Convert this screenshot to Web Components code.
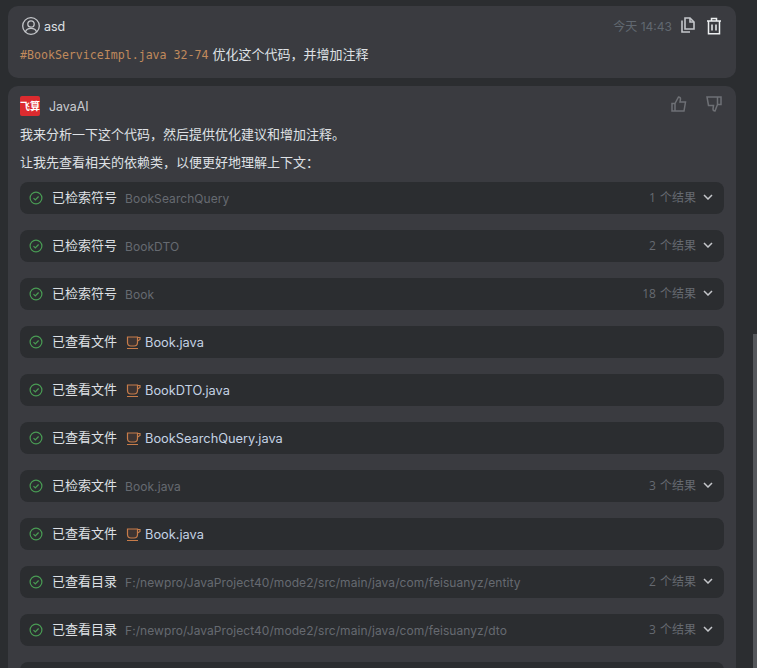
<!DOCTYPE html>
<html lang="zh">
<head>
<meta charset="utf-8">
<title>JavaAI</title>
<style>
  html, body { margin: 0; height: 100%; overflow: hidden; }
  body {
    background: #2b2d30;
    color: #dfe1e5;
    font: 12.8px/20px Inter, "Noto Sans CJK SC", sans-serif;
  }
</style>
</head>
<body>
<chat-page>
  <user-card name="asd" time="今天 14:43"><span slot="code">#BookServiceImpl.java 32-74</span>优化这个代码，并增加注释</user-card>
  <ai-card name="JavaAI">
    <p>我来分析一下这个代码，然后提供优化建议和增加注释。</p>
    <p>让我先查看相关的依赖类，以便更好地理解上下文：</p>
    <step-row slot="steps" action="已检索符号" detail="BookSearchQuery" count="1 个结果"></step-row>
    <step-row slot="steps" action="已检索符号" detail="BookDTO" count="2 个结果"></step-row>
    <step-row slot="steps" action="已检索符号" detail="Book" count="18 个结果"></step-row>
    <step-row slot="steps" action="已查看文件" file="Book.java"></step-row>
    <step-row slot="steps" action="已查看文件" file="BookDTO.java"></step-row>
    <step-row slot="steps" action="已查看文件" file="BookSearchQuery.java"></step-row>
    <step-row slot="steps" action="已检索文件" detail="Book.java" count="3 个结果"></step-row>
    <step-row slot="steps" action="已查看文件" file="Book.java"></step-row>
    <step-row slot="steps" action="已查看目录" detail="F:/newpro/JavaProject40/mode2/src/main/java/com/feisuanyz/entity" count="2 个结果"></step-row>
    <step-row slot="steps" action="已查看目录" detail="F:/newpro/JavaProject40/mode2/src/main/java/com/feisuanyz/dto" count="3 个结果"></step-row>
    <step-row slot="steps"></step-row>
  </ai-card>
</chat-page>

<script>
class ChatPage extends HTMLElement {
  connectedCallback() {
    this.attachShadow({ mode: "open" });
    this.shadowRoot.innerHTML = `
      <style>
        :host { display: block; height: 668px; position: relative; overflow: hidden; }
        .list { display: flex; flex-direction: column; gap: 8px; padding: 6px 21px 0 8px; }
        /* scrollbar lies over the page edge */
        .thumb { position: absolute; right: 0; top: 334px; width: 4px; height: 334px; background: #55575b; }
      </style>
      <div class="list"><slot></slot></div>
      <div class="thumb"></div>
    `;
  }
}

class UserCard extends HTMLElement {
  connectedCallback() {
    this.attachShadow({ mode: "open" });
    this.shadowRoot.innerHTML = `
      <style>
        :host { display: block; background: #3a3b40; border-radius: 10px; height: 72px; padding: 0 12px; box-sizing: border-box; }
        .head { display: flex; align-items: center; height: 40px; }
        .avatar { width: 20px; height: 20px; margin-left: 1px; margin-right: 3px; flex: none; }
        .name { color: #dfe1e5; font-size: 12.5px; margin-top: 2px; }
        .time { margin-left: auto; color: #616870; font-size: 12px; margin-top: 1px; }
        .tools { display: flex; gap: 11px; margin-left: 9px; margin-right: 2px; }
        .body { color: #dfe1e5; font-size: 13px; line-height: 20px; margin-top: -2px; }
        ::slotted([slot="code"]) { color: #c08a5c; font: 11.6px/20px "DejaVu Sans Mono", monospace; margin-right: 4px; }
      </style>
      <div class="head">
        <svg class="avatar" viewBox="0 0 20 20" fill="none" stroke="#c4c6ca" stroke-width="1.3">
          <circle cx="10" cy="10" r="8.3"/><circle cx="10" cy="8" r="3.2"/>
          <path d="M4.400 16c.8-2.600 2.900-3.600 5.600-3.600s4.800 1 5.600 3.600"/>
        </svg>
        <span class="name">${this.getAttribute("name")}</span>
        <span class="time">${this.getAttribute("time")}</span>
        <div class="tools">
          <svg width="14" height="16" viewBox="0 0 14 16" fill="none" stroke="#c4c6ca" stroke-width="1.6">
            <path d="M4 1h5l4 4v7H4z"/><path d="M9 1v4h4" /><path d="M1 3.500V15h8"/>
          </svg>
          <svg width="16" height="18" viewBox="0 0 16 18" fill="none" stroke="#eceef0" stroke-width="1.5">
            <path d="M1 4h14M5.500 4V1.500h5V4M2.500 4v12.800h11V4M6 7.500v6M10 7.500v6"/>
          </svg>
        </div>
      </div>
      <div class="body"><slot name="code"></slot><slot></slot></div>
    `;
  }
}

class AiCard extends HTMLElement {
  connectedCallback() {
    this.attachShadow({ mode: "open" });
    this.shadowRoot.innerHTML = `
      <style>
        :host { display: block; background: #3a3b40; border-radius: 10px 10px 0 0; padding: 0 12px; }
        .head { display: flex; align-items: center; height: 40px; }
        .logo {
          width: 20px; height: 20px; border-radius: 2px; background: #dc2b2f; color: #fff; flex: none;
          font: 700 10px/20px "Noto Sans CJK SC", sans-serif; text-align: center; overflow: hidden; white-space: nowrap;
        }
        .name { margin-left: 9px; color: #c9ccd1; font-size: 12.4px; margin-top: 2px; }
        .tools { margin-left: auto; display: flex; gap: 19px; margin-right: 2px; margin-top: -4px; }
        .text { margin-top: -1px; }
        ::slotted(p) { margin: 0 0 9px; font-size: 13px; line-height: 19px; color: #dfe1e5; }
        .steps { display: flex; flex-direction: column; gap: 16px; padding: 1px 0 16px; }
      </style>
      <div class="head">
        <div class="logo">飞算</div>
        <span class="name">${this.getAttribute("name")}</span>
        <div class="tools">
          <svg width="16" height="16" viewBox="0 0 16 16" fill="none" stroke="#6e7075" stroke-width="1.5">
            <path d="M1 7.500h3V15H1zM4 7.500 7.500 1c1.500 0 2 1 2 2L9 6h5.500L13 15H4"/>
          </svg>
          <svg width="16" height="16" viewBox="0 0 16 16" fill="none" stroke="#6e7075" stroke-width="1.5">
            <path d="M1 1h14v7.500h-3.500L9 15c-1.500 0-2-1-2-2l.5-3.500h-5L1 1zM11.500 1v7.500"/>
          </svg>
        </div>
      </div>
      <div class="text"><slot></slot></div>
      <div class="steps"><slot name="steps"></slot></div>
    `;
  }
}

class StepRow extends HTMLElement {
  connectedCallback() {
    const action = this.getAttribute("action");
    const detail = this.getAttribute("detail");
    const file = this.getAttribute("file");
    const count = this.getAttribute("count");
    this.attachShadow({ mode: "open" });
    this.shadowRoot.innerHTML = `
      <style>
        :host { display: flex; align-items: center; height: 32px; background: #2b2d30; border-radius: 8px; padding: 0 11px 0 9px; white-space: nowrap; }
        .check { width: 14px; height: 14px; flex: none; margin-right: 9px; }
        .action { color: #dfe1e5; font-size: 13px; margin-top: -2px; }
        .detail { margin-left: 8px; color: #666a70; font-size: 12px; letter-spacing: .07px; margin-top: 2px; }
        .cup { width: 15px; height: 15px; flex: none; margin-left: 9px; margin-right: 4px; }
        .file { color: #c4d2e4; margin-top: 2px; }
        .count { margin-left: auto; color: #666a71; font: 12px/20px "Open Sans", "Noto Sans CJK SC", sans-serif; word-spacing: 1px; }
        .chev { width: 10px; height: 6px; flex: none; margin-left: 7px; margin-top: -2px; }
      </style>
      ${action ? `
      <svg class="check" viewBox="0 0 14 14" fill="none" stroke="#499c54" stroke-width="1.2">
        <circle cx="7" cy="7" r="5.900"/><path d="M4.500 7.200 6.300 9l3.300-3.500"/>
      </svg>
      <span class="action">${action}</span>` : ""}
      ${file ? `
        <svg class="cup" viewBox="0 0 15 15" fill="none" stroke="#c77c4a" stroke-width="1.200">
          <path d="M1.500 2h10v5.500c0 2-1.500 3.500-3.500 3.500H5c-2 0-3.500-1.500-3.500-3.500z" fill="#3d3432"/>
          <path d="M11.500 2.500H14v2l-2.500 1.500M1 13.500h11"/>
        </svg>
        <span class="file">${file}</span>` : ""}
      ${detail ? `<span class="detail">${detail}</span>` : ""}
      ${count ? `<span class="count">${count}</span>
        <svg class="chev" viewBox="0 0 10 6" fill="none" stroke="#c4c6ca" stroke-width="1.500"><path d="M1 1l4 4 4-4"/></svg>` : ""}
    `;
  }
}

customElements.define("chat-page", ChatPage);
customElements.define("user-card", UserCard);
customElements.define("ai-card", AiCard);
customElements.define("step-row", StepRow);
</script>
</body>
</html>
